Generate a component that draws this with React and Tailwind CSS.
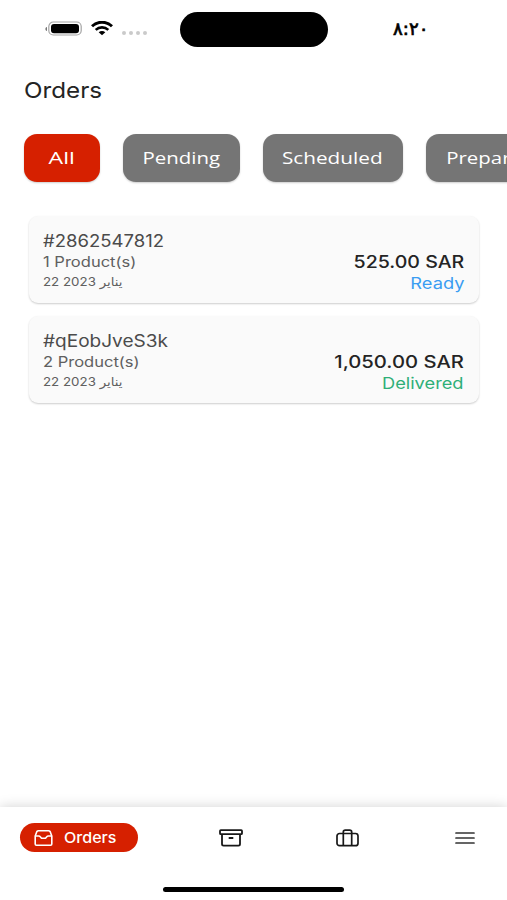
import React from 'react';

const filters = [
  { label: 'All', width: 'w-[76px]', scale: 'scale-x-[1.36]', active: true },
  { label: 'Pending', width: 'w-[117px]', scale: 'scale-x-[1.2]' },
  { label: 'Scheduled', width: 'w-[139.500px]', scale: 'scale-x-[1.22]' },
  { label: 'Preparing', width: 'w-[134px]', scale: 'scale-x-[1.2]' },
];

const orders = [
  {
    id: '#2862547812',
    products: '1 Product(s)',
    date: '22 2023 يناير',
    total: '525.00 SAR',
    totalScale: 'scale-x-[1.15]',
    status: 'Ready',
    statusColor: 'text-[#3a9df2]',
    idScale: 'scale-x-[1.09]',
  },
  {
    id: '#qEobJveS3k',
    products: '2 Product(s)',
    date: '22 2023 يناير',
    total: '1,050.00 SAR',
    totalScale: 'scale-x-[1.19]',
    status: 'Delivered',
    statusColor: 'text-[#2eaf78]',
    idScale: 'scale-x-[1.12]',
  },
];

function StatusBar() {
  return (
    <div className="flex h-[60px] shrink-0 items-start pl-[45px] pt-3">
      <svg className="mt-[9px] h-[15px] w-[37px]" viewBox="0 0 37 15" fill="none">
        <path d="M2 6v4C.8 9.700 .4 9 .4 8s.4-1.700 1.600-2z" fill="#777" />
        <rect x="3.800" y="1" width="32.400" height="13" rx="4.500" stroke="#a3a3a3" strokeWidth="1.200" />
        <rect x="6" y="3" width="28" height="9.200" rx="3" fill="#000" />
      </svg>
      <svg className="ml-[9px] mt-[9px] h-[15px] w-[22px]" viewBox="0 0 22 15" fill="none">
        <path d="M1 5.300C6.500-.1 15.500-.1 21 5.300" stroke="#000" strokeWidth="3" />
        <path d="M4.700 8.900c3.600-3.400 9-3.400 12.600 0" stroke="#000" strokeWidth="2.600" />
        <path d="M7.700 11.200c1.900-1.700 4.700-1.700 6.600 0L11 14.300z" fill="#000" />
      </svg>
      <div className="ml-[9px] mt-[19px] flex gap-[3px]">
        <span className="size-1 rounded-full bg-[#cacaca]" />
        <span className="size-1 rounded-full bg-[#cacaca]" />
        <span className="size-1 rounded-full bg-[#cacaca]" />
        <span className="size-1 rounded-full bg-[#cacaca]" />
      </div>
      <div className="ml-[33px] h-[35px] w-[148px] rounded-full bg-black" />
      <span className="ml-[65px] mt-[3px] inline-block origin-left scale-x-[1.01] font-['DejaVu_Sans',sans-serif] text-[18px] leading-7 text-black [-webkit-text-stroke:0.7px_black]">
        ٨:٢٠
      </span>
    </div>
  );
}

function OrderCard({ order }) {
  return (
    <div className="flex h-[87px] justify-between rounded-[9px] bg-[#fafafa] pl-[14px] pr-[15px] pt-[14px] shadow-[0_1px_2px_rgba(0,0,0,0.2)]">
      <div className="flex flex-col items-start whitespace-nowrap">
        <span className={`origin-left text-[17px] leading-[22px] text-[#4b4b4b] ${order.idScale}`}>{order.id}</span>
        <span className="origin-left scale-x-[1.18] text-[14px] leading-5 text-[#606060]">{order.products}</span>
        <span className="origin-left scale-x-[1.11] text-[12px] leading-5 text-[#606060]">{order.date}</span>
      </div>
      <div className="flex flex-col items-end whitespace-nowrap pt-[22px]">
        <span className={`origin-right text-[17px] leading-[21px] font-medium text-[#242424] ${order.totalScale}`}>
          {order.total}
        </span>
        <span className={`origin-right scale-x-[1.14] text-[16px] leading-[21px] ${order.statusColor}`}>
          {order.status}
        </span>
      </div>
    </div>
  );
}

function BottomNav() {
  return (
    <nav className="flex h-[93px] shrink-0 flex-col items-center bg-white shadow-[0_0_12px_rgba(0,0,0,0.18)]">
      <div className="flex h-[61px] w-full items-center pl-5">
        <div className="flex h-[29px] w-[117.500px] items-center rounded-full bg-[#d62000] pl-[14px] text-white">
          <svg className="h-[18px] w-[19px]" viewBox="0 0 19 18" fill="none" stroke="currentColor" strokeWidth="1.600" strokeLinejoin="round">
            <path d="M1.200 7 2.900 2.500Q3.400 1.700 4.500 1.700h10q1.100 0 1.600.8L17.800 7v8q0 1.200-1.200 1.200H2.400Q1.200 16.200 1.200 15z" />
            <path d="M1.200 7h3.600q.9 0 1.500.8l.5.6q.7.9 1.700.9h2q1 0 1.700-.9l.5-.6q.6-.8 1.500-.8h3.600" />
          </svg>
          <span className="ml-[11px] mt-px inline-block origin-left scale-x-[1.07] text-[15px] font-medium">Orders</span>
        </div>
        <svg className="ml-[81.500px] h-[18px] w-6" viewBox="0 0 24 18" fill="none" stroke="#181818" strokeWidth="1.800" strokeLinejoin="round">
          <rect x="1" y="1.200" width="22" height="4" rx=".8" />
          <path d="M3 5.200v9.800q0 1.600 1.600 1.600h14.800q1.600 0 1.600-1.600V5.200M9.700 9h4.600" />
        </svg>
        <svg className="ml-[93px] h-[18px] w-[23px]" viewBox="0 0 23 18" fill="none" stroke="#181818" strokeWidth="1.700">
          <rect x="1" y="4.500" width="21" height="12.200" rx="2.500" />
          <path d="M7.300 16.700V3q0-1.900 2-1.900h4.400q2 0 2 1.900v13.700" />
        </svg>
        <svg className="ml-[96px] h-[14px] w-5" viewBox="0 0 20 14" fill="none" stroke="#333" strokeWidth="1.700" strokeLinecap="round">
          <path d="M1 2h18M1 7h18M1 12h18" />
        </svg>
      </div>
      <div className="mt-[19px] h-[5px] w-[181px] rounded-full bg-black" />
    </nav>
  );
}

export default function App() {
  return (
    <div className="flex h-[900px] w-[507px] flex-col overflow-hidden bg-white font-['Inter','DejaVu_Sans',sans-serif]">
      <StatusBar />
      <h1 className="h-[74px] shrink-0 pl-6 pt-[14px] text-[22px] leading-8 text-[#242424]">
        <span className="inline-block origin-left scale-x-[1.1]">Orders</span>
      </h1>
      <div className="flex h-12 shrink-0 gap-[23px] overflow-visible pl-6">
        {filters.map((filter) => (
          <button
            key={filter.label}
            type="button"
            className={`flex h-12 shrink-0 items-center justify-center rounded-[13px] font-['Open_Sans',sans-serif] text-[17px] font-medium text-white shadow-[0_1px_2px_rgba(0,0,0,0.2)] ${filter.width} ${filter.active ? 'bg-[#d62000]' : 'bg-[#757575]'}`}
          >
            <span className={`inline-block ${filter.scale}`}>{filter.label}</span>
          </button>
        ))}
      </div>
      <main className="flex grow flex-col gap-[12.500px] pl-[29px] pr-7 pt-[34px]">
        {orders.map((order) => (
          <OrderCard key={order.id} order={order} />
        ))}
      </main>
      <BottomNav />
    </div>
  );
}
